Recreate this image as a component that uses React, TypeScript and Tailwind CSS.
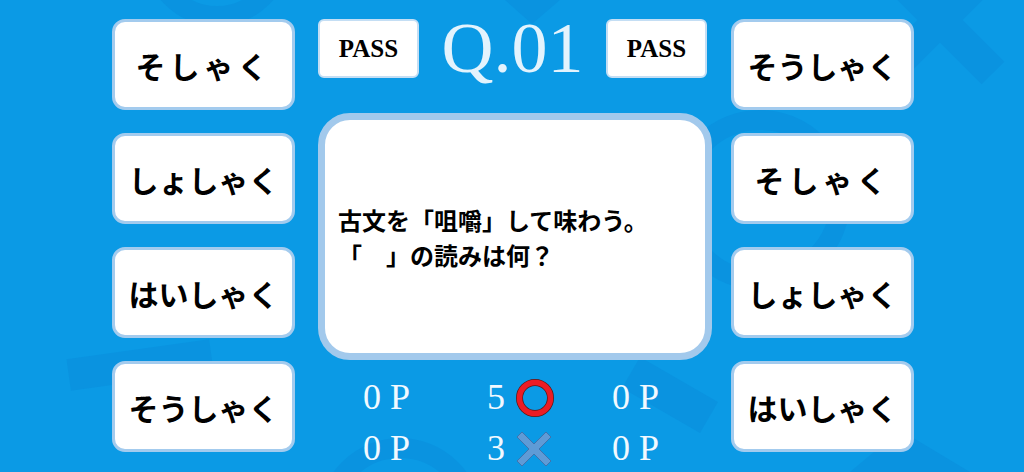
import React from "react";

const jp = { fontFamily: '"Noto Sans CJK JP", "Noto Sans", sans-serif' };
const serif = { fontFamily: '"Liberation Serif", "DejaVu Serif", serif' };

function Card({ text, wide }: { text: string; wide?: boolean }) {
  return (
    <div className="w-[183px] h-[91px] rounded-[13px] border-[3px] border-[#a3cbee] bg-white flex items-center justify-center">
      <span
        className={`text-[30px] font-bold text-black leading-none ${wide ? "tracking-[4px]" : "tracking-[0px]"}`}
        style={jp}
      >
        {text}
      </span>
    </div>
  );
}

function Pass() {
  return (
    <div className="w-[101px] h-[59px] rounded-[6px] border-2 border-[#c4def4] bg-white flex items-center justify-center">
      <span className="text-[25px] font-bold text-black leading-none" style={serif}>
        PASS
      </span>
    </div>
  );
}

function Ring() {
  return (
    <svg width="38" height="38" viewBox="0 0 38 38">
      <circle cx="19" cy="19" r="15.5" fill="none" stroke="#5a1a1a" strokeWidth="7" />
      <circle cx="19" cy="19" r="15.5" fill="none" stroke="#ec1c24" strokeWidth="5.5" />
    </svg>
  );
}

function Cross() {
  return (
    <svg width="36" height="36" viewBox="0 0 36 36">
      <path
        d="M6 1 L18 13 L30 1 L35 6 L23 18 L35 30 L30 35 L18 23 L6 35 L1 30 L13 18 L1 6 Z"
        fill="#5f9bd6"
        stroke="#3f74ae"
        strokeWidth="1"
        strokeLinejoin="round"
      />
    </svg>
  );
}

function ScoreRow({ n, icon }: { n: string; icon: React.ReactNode }) {
  return (
    <div className="flex items-center h-[51px] text-[36px] leading-[51px] text-[#f2f9ff]" style={serif}>
      <div className="w-[169px] pl-[45px]">0&nbsp;P</div>
      <div className="w-[125px] flex items-center">
        <span>{n}</span>
        <span className="ml-[11px] flex items-center">{icon}</span>
      </div>
      <div>0&nbsp;P</div>
    </div>
  );
}

export default function App() {
  return (
    <div className="relative w-[1024px] h-[472px] overflow-hidden bg-[#0b9ae5]">
      <svg className="absolute inset-0" width="1024" height="472" viewBox="0 0 1024 472">
        <g fill="none" stroke="#0a93e0" strokeWidth="20">
          <circle cx="217" cy="-48" r="64" />
          <circle cx="400" cy="520" r="72" />
          <circle cx="760" cy="200" r="80" />
        </g>
        <g fill="#0a93e0">
          <polygon points="505,0 560,0 532,24" />
          <g transform="translate(940 20) rotate(45)">
            <rect x="-75" y="-16" width="150" height="32" />
            <rect x="-16" y="-75" width="32" height="150" />
          </g>
          <g transform="translate(140 365) rotate(-8)">
            <rect x="-72" y="-16" width="144" height="32" />
          </g>
          <g transform="translate(670 395) rotate(30)">
            <rect x="-45" y="-18" width="90" height="36" />
          </g>
          <polygon points="850,472 970,472 900,430" />
        </g>
      </svg>

      <div className="relative flex pl-[112px] pt-[19px]">
        <div className="flex flex-col gap-[23px]">
          <Card text="そしゃく" wide />
          <Card text="しょしゃく" />
          <Card text="はいしゃく" />
          <Card text="そうしゃく" />
        </div>

        <div className="ml-[23px] w-[394px] flex flex-col">
          <div className="w-[389px] flex items-center justify-between h-[59px]">
            <Pass />
            <span className="text-[72px] leading-none text-[#e3f3fd] -mt-[2px]" style={serif}>
              Q.01
            </span>
            <Pass />
          </div>

          <div className="mt-[35px] h-[247px] rounded-[32px] border-[7px] border-[#a2c9ec] bg-white flex flex-col justify-center pl-[13px]">
            <div className="text-[24px] font-bold leading-[35px] text-black" style={jp}>
              <div>古文を「咀嚼」して味わう。</div>
              <div>「　」の読みは何？</div>
            </div>
          </div>

          <div className="mt-[12px]">
            <ScoreRow n="5" icon={<Ring />} />
            <ScoreRow n="3" icon={<Cross />} />
          </div>
        </div>

        <div className="ml-[19px] flex flex-col gap-[23px]">
          <Card text="そうしゃく" />
          <Card text="そしゃく" wide />
          <Card text="しょしゃく" />
          <Card text="はいしゃく" />
        </div>
      </div>
    </div>
  );
}
